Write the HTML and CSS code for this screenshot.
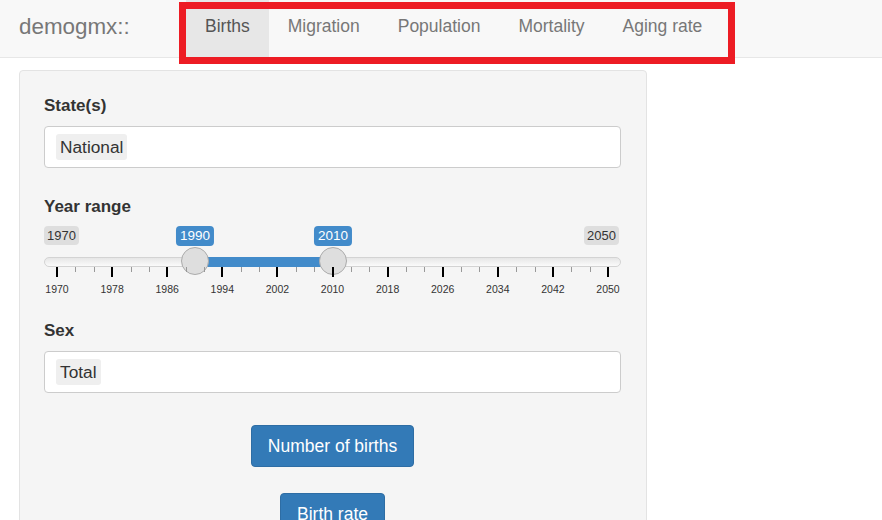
FILE: index.html
```html
<!DOCTYPE html>
<html>
<head>
<meta charset="utf-8">
<link rel="stylesheet" href="styles.css">
</head>
<body>
<nav class="navbar">
  <div class="brand">demogmx::</div>
  <ul class="tabs">
    <li class="tab active">Births</li>
    <li class="tab">Migration</li>
    <li class="tab">Population</li>
    <li class="tab">Mortality</li>
    <li class="tab">Aging rate</li>
  </ul>
  <div class="highlight"></div>
</nav>
<main class="page">
  <section class="well">
    <div class="group">
      <label class="label">State(s)</label>
      <div class="select"><span class="chip">National</span></div>
    </div>
    <div class="group group-slider">
      <label class="label label-slider">Year range</label>
      <div class="slider">
        <span class="edge edge-min">1970</span>
        <span class="edge edge-max">2050</span>
        <div class="track"></div>
        <div class="bar" style="left:151px;width:138px"></div>
        <span class="tag" style="left:151px">1990</span>
        <span class="tag" style="left:289px">2010</span>
        <span class="handle" style="left:151px"></span>
        <span class="handle" style="left:289px"></span>
        <div class="grid">
          <span class="tick major" style="left:13px"></span>
          <span class="tick" style="left:31.4px"></span>
          <span class="tick" style="left:49.7px"></span>
          <span class="tick major" style="left:68.1px"></span>
          <span class="tick" style="left:86.5px"></span>
          <span class="tick" style="left:104.8px"></span>
          <span class="tick major" style="left:123.2px"></span>
          <span class="tick" style="left:141.6px"></span>
          <span class="tick" style="left:159.9px"></span>
          <span class="tick major" style="left:178.3px"></span>
          <span class="tick" style="left:196.7px"></span>
          <span class="tick" style="left:215px"></span>
          <span class="tick major" style="left:233.4px"></span>
          <span class="tick" style="left:251.8px"></span>
          <span class="tick" style="left:270.1px"></span>
          <span class="tick major" style="left:288.5px"></span>
          <span class="tick" style="left:306.9px"></span>
          <span class="tick" style="left:325.2px"></span>
          <span class="tick major" style="left:343.6px"></span>
          <span class="tick" style="left:362px"></span>
          <span class="tick" style="left:380.3px"></span>
          <span class="tick major" style="left:398.7px"></span>
          <span class="tick" style="left:417.1px"></span>
          <span class="tick" style="left:435.4px"></span>
          <span class="tick major" style="left:453.8px"></span>
          <span class="tick" style="left:472.2px"></span>
          <span class="tick" style="left:490.5px"></span>
          <span class="tick major" style="left:508.9px"></span>
          <span class="tick" style="left:527.3px"></span>
          <span class="tick" style="left:545.6px"></span>
          <span class="tick major" style="left:564px"></span>
          <span class="num" style="left:13px">1970</span>
          <span class="num" style="left:68.1px">1978</span>
          <span class="num" style="left:123.2px">1986</span>
          <span class="num" style="left:178.3px">1994</span>
          <span class="num" style="left:233.4px">2002</span>
          <span class="num" style="left:288.5px">2010</span>
          <span class="num" style="left:343.6px">2018</span>
          <span class="num" style="left:398.7px">2026</span>
          <span class="num" style="left:453.8px">2034</span>
          <span class="num" style="left:508.9px">2042</span>
          <span class="num" style="left:564px">2050</span>
        </div>
      </div>
    </div>
    <div class="group">
      <label class="label">Sex</label>
      <div class="select"><span class="chip">Total</span></div>
    </div>
    <div class="actions">
      <button class="btn btn-first">Number of births</button>
      <button class="btn btn-second">Birth rate</button>
    </div>
  </section>
</main>
</body>
</html>
```
FILE: styles.css
```css
* { box-sizing: border-box; }
html, body {
  margin: 0;
  padding: 0;
  background: #fff;
  overflow: hidden;
  height: 520px;
  font-family: "Liberation Sans", Arial, sans-serif;
  color: #333;
}
.navbar {
  position: relative;
  display: flex;
  height: 58px;
  background: #f8f8f8;
  border-bottom: 1px solid #e7e7e7;
}
.brand {
  width: 186px;
  padding-left: 19px;
  font-size: 22.4px;
  line-height: 53px;
  color: #777;
}
.tabs {
  display: flex;
  margin: 0;
  padding: 0;
  list-style: none;
}
.tab {
  padding: 0 19px;
  font-size: 17.5px;
  line-height: 53px;
  height: 57px;
  color: #777;
}
.tab.active {
  background: #e7e7e7;
  color: #555;
}
.highlight {
  position: absolute;
  left: 179px;
  top: 2px;
  width: 556px;
  height: 62px;
  border: 7px solid #ed1c24;
  pointer-events: none;
}
.page {
  padding: 12px 0 0 19px;
}
.well {
  width: 628px;
  min-height: 480px;
  background: #f5f5f5;
  border: 1px solid #e3e3e3;
  border-radius: 4px;
  padding: 23px 25px 0 24px;
}
.group {
  margin-bottom: 27px;
}
.group-slider {
  margin-bottom: 20px;
}
.label {
  display: block;
  font-size: 17px;
  font-weight: bold;
  line-height: 24px;
  margin-bottom: 8px;
  color: #333;
}
.label-slider {
  margin-bottom: 7px;
}
.select {
  display: flex;
  align-items: center;
  height: 42px;
  background: #fff;
  border: 1px solid #ccc;
  border-radius: 4px;
  padding: 0 11px;
}
.chip {
  display: inline-block;
  background: #efefef;
  border-radius: 3px;
  padding: 0 4px;
  height: 26px;
  line-height: 26px;
  font-size: 17.3px;
  color: #333;
}
.slider {
  position: relative;
  height: 73px;
}
.edge {
  position: absolute;
  top: 0;
  height: 19px;
  line-height: 19px;
  padding: 0 3px;
  font-size: 13px;
  color: #333;
  background: #dedede;
  border-radius: 4px;
}
.edge-min { left: 0; }
.edge-max { right: 2px; }
.track {
  position: absolute;
  left: 0;
  right: 0;
  top: 31px;
  height: 10px;
  border: 1px solid #d3d3d3;
  border-radius: 5px;
  background: linear-gradient(to bottom, #e6e6e6, #fafafa);
}
.bar {
  position: absolute;
  top: 31px;
  height: 10px;
  background: #428bca;
}
.tag {
  position: absolute;
  top: 0;
  height: 20px;
  line-height: 20px;
  padding: 0 4px;
  transform: translateX(-50%);
  background: #428bca;
  color: #fff;
  font-size: 13.5px;
  border-radius: 4px;
}
.handle {
  position: absolute;
  top: 21px;
  width: 28px;
  height: 28px;
  margin-left: -14px;
  border-radius: 50%;
  background: #dedede;
  border: 1px solid #ababab;
}
.grid {
  position: absolute;
  left: 0;
  right: 0;
  top: 41px;
  height: 32px;
}
.tick {
  position: absolute;
  top: 0;
  width: 1px;
  height: 5px;
  background: #999;
}
.tick.major {
  width: 2px;
  margin-left: -1px;
  height: 10px;
  background: #000;
}
.num {
  position: absolute;
  top: 16px;
  transform: translateX(-50%);
  font-size: 10.5px;
  line-height: 12px;
  color: #333;
}
.actions {
  display: flex;
  flex-direction: column;
  align-items: center;
  padding-top: 5px;
}
.btn {
  height: 42px;
  padding: 0 16px;
  font-family: "Liberation Sans", Arial, sans-serif;
  font-size: 17.5px;
  color: #fff;
  background: #337ab7;
  border: 1px solid #2e6da4;
  border-radius: 4px;
}
.btn-second {
  margin-top: 26px;
}
```
